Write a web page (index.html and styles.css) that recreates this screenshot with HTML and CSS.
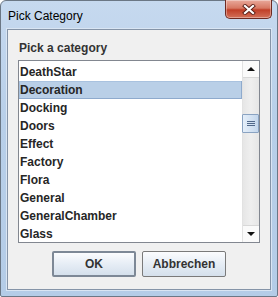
FILE: index.html
```html
<!DOCTYPE html>
<html lang="de">
<head>
  <meta charset="UTF-8" />
  <title>Pick Category</title>
  <link rel="stylesheet" href="styles.css">
</head>
<body>
  <div class="window">
    <div class="titlebar">
      <span class="title">Pick Category</span>
      <button class="close" title="Schließen">
        <svg width="14" height="11" viewBox="0 0 14 11">
          <path d="M3 2 L11 9 M11 2 L3 9" stroke="#5a1f18" stroke-width="4" stroke-linecap="square" />
          <path d="M3 2 L11 9 M11 2 L3 9" stroke="#ffffff" stroke-width="2.2" stroke-linecap="square" />
        </svg>
      </button>
    </div>

    <div class="content">
      <div class="label">Pick a category</div>

      <div class="listbox">
        <div class="list-view">
          <ul class="items">
            <li>DeathStar</li>
            <li class="selected">Decoration</li>
            <li>Docking</li>
            <li>Doors</li>
            <li>Effect</li>
            <li>Factory</li>
            <li>Flora</li>
            <li>General</li>
            <li>GeneralChamber</li>
            <li>Glass</li>
          </ul>
        </div>
        <div class="scrollbar">
          <div class="sb-btn"><span class="arrow up"></span></div>
          <div class="sb-track">
            <div class="sb-thumb"><span class="grip"></span></div>
          </div>
          <div class="sb-btn"><span class="arrow down"></span></div>
        </div>
      </div>

      <div class="buttons">
        <button class="btn default">OK</button>
        <button class="btn">Abbrechen</button>
      </div>
    </div>
  </div>
</body>
</html>
```

FILE: styles.css
```css
html, body {
  margin: 0;
  padding: 0;
  background: #ffffff;
}
body {
  width: 278px;
  height: 297px;
  font-family: "Liberation Sans", Arial, sans-serif;
  color: #333;
}
.window {
  box-sizing: border-box;
  width: 278px;
  height: 297px;
  border: 1px solid #6b7785;
  border-radius: 6px 6px 2px 2px;
  background: linear-gradient(#c6d9ef, #b8cfe9 40%, #b4cce7);
  padding: 0 6px 6px 6px;
  display: flex;
  flex-direction: column;
}
.titlebar {
  height: 28px;
  display: flex;
  align-items: flex-start;
  justify-content: space-between;
}
.title {
  font-size: 12px;
  color: #000;
  margin-top: 8px;
  margin-left: 1px;
}
.close {
  width: 47px;
  height: 19px;
  margin-top: -1px;
  margin-right: -1px;
  padding: 0;
  border: 1px solid #6e2a22;
  border-top: none;
  border-radius: 0 0 5px 5px;
  background: linear-gradient(#e9a99b, #d77863 45%, #c03f28 55%, #d3715a);
  display: flex;
  align-items: center;
  justify-content: center;
  box-shadow: inset 0 0 0 1px rgba(255,255,255,0.35);
}
.content {
  flex: 1;
  border: 1px solid #8594a8;
  box-shadow: 0 0 0 1px #d9e5f3;
  background: #f0f0f0;
  padding: 11px 10px 0 10px;
  display: flex;
  flex-direction: column;
}
.label {
  font-size: 12px;
  font-weight: bold;
  line-height: 14px;
  padding-left: 1px;
  margin-bottom: 5px;
}
.listbox {
  box-sizing: border-box;
  height: 183px;
  border: 1px solid #828790;
  background: #fff;
  display: flex;
}
.list-view {
  flex: 1;
  overflow: hidden;
}
/* list is scrolled so the row above DeathStar is just out of view */
.items {
  list-style: none;
  margin: 0;
  padding: 2px 0 0 0;
}
.items li {
  box-sizing: border-box;
  height: 18px;
  line-height: 18px;
  padding-left: 1px;
  font-size: 12px;
  font-weight: bold;
  color: #262626;
}
.items li.selected {
  background: #b9cfe7;
  box-shadow: inset -1px -1px 0 #8eaacd, inset 1px 1px 0 #a9c2df;
}
.scrollbar {
  width: 16px;
  border-left: 1px solid #e2e2e2;
  background: #f4f4f4;
  display: flex;
  flex-direction: column;
}
.sb-btn {
  height: 16px;
  display: flex;
  align-items: center;
  justify-content: center;
  background: #fafafa;
}
.arrow {
  width: 0;
  height: 0;
  border-left: 4px solid transparent;
  border-right: 4px solid transparent;
}
.arrow.up {
  border-bottom: 4px solid #111;
}
.arrow.down {
  border-top: 4px solid #111;
}
.sb-track {
  flex: 1;
  background: linear-gradient(90deg, #e6e6e6, #efefef 50%, #e6e6e6);
  border-top: 1px solid #d8d8d8;
  border-bottom: 1px solid #d8d8d8;
  padding-top: 36px;
}
.sb-thumb {
  box-sizing: border-box;
  height: 19px;
  margin: 0 0 0 -1px;
  border: 1px solid #8aa3c2;
  border-radius: 1px;
  background: linear-gradient(90deg, #e4eef9, #d2e1f2 60%, #c3d6ec);
  display: flex;
  align-items: center;
  justify-content: center;
}
.grip {
  width: 8px;
  height: 5px;
  border-top: 1px solid #50688a;
  border-bottom: 1px solid #50688a;
  box-sizing: border-box;
  position: relative;
}
.grip::after {
  content: "";
  position: absolute;
  left: 0;
  right: 0;
  top: 1px;
  border-top: 1px solid #50688a;
}
.buttons {
  display: flex;
  justify-content: center;
  gap: 6px;
  margin-top: 8px;
}
.btn {
  box-sizing: border-box;
  width: 84px;
  height: 26px;
  padding: 0;
  border: 1px solid #7a7a7a;
  border-radius: 2px;
  background: linear-gradient(#fbfcfe, #e6edf5 50%, #d5e0ec);
  font-family: "Liberation Sans", Arial, sans-serif;
  font-size: 12px;
  font-weight: bold;
  color: #333;
}
.btn.default {
  border: 2px solid #7d8896;
}
```
